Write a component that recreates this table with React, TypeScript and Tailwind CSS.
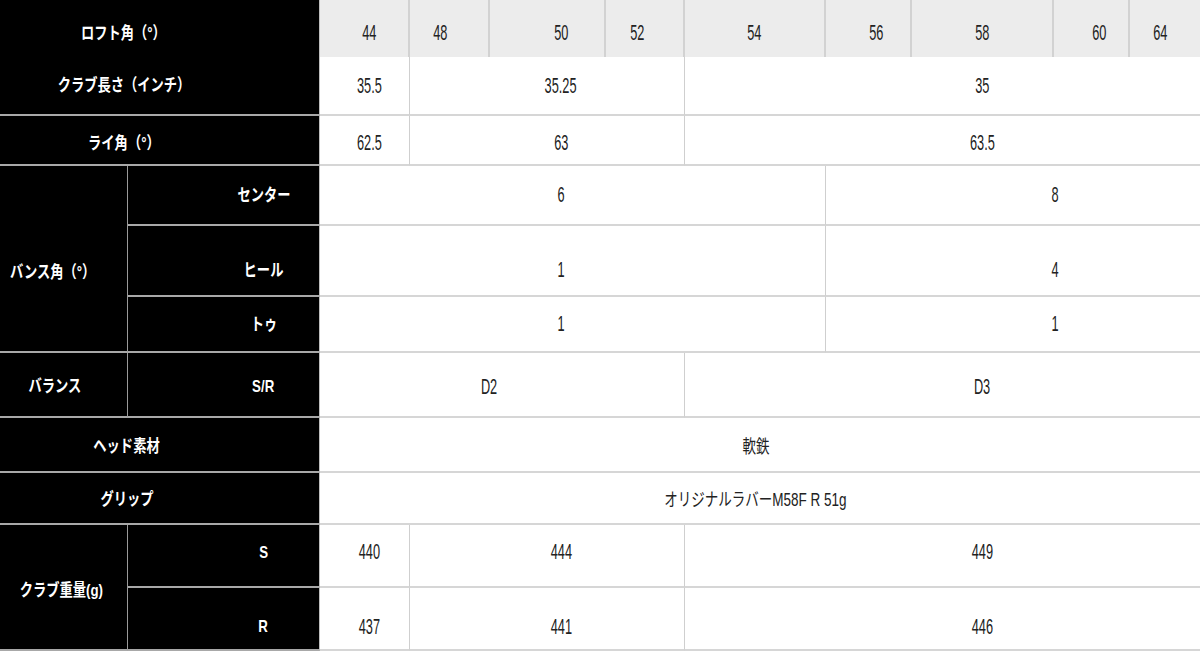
import React from 'react';

const NUM = 'inline-block scale-x-[0.58] text-[22px] leading-none text-[#222]';
const LABEL = 'inline-block scale-x-[0.78] text-[17px] font-bold leading-none text-white whitespace-nowrap';
const JP = 'inline-block scale-x-[0.75] text-[18px] leading-none text-[#222] whitespace-nowrap';

const cell = 'flex items-center justify-center';
const dataLine = 'border-b-2 border-b-[#d6d6d6]';
const labelLine = 'border-b-2 border-b-[#a8a8a8]';
const vLine = 'border-r border-r-[#cfcfcf]';

// loft header cells: width + padding to shift the number like the original
const loftCells = [
  { v: '44', c: 'w-[90px] pl-[10px] border-r-2 border-r-[#d2d2d2]' },
  { v: '48', c: 'w-[80px] pr-[18px] border-r-2 border-r-[#d2d2d2]' },
  { v: '50', c: 'w-[116px] pl-[28px] border-r-2 border-r-[#d2d2d2]' },
  { v: '52', c: 'w-[79px] pr-[15px] border-r-2 border-r-[#d2d2d2]' },
  { v: '54', c: 'w-[141px] border-r-2 border-r-[#d2d2d2]' },
  { v: '56', c: 'w-[86px] pl-[16px] border-r-2 border-r-[#d2d2d2]' },
  { v: '58', c: 'w-[142px] border-r-2 border-r-[#d2d2d2]' },
  { v: '60', c: 'w-[76px] pl-[16px] border-r-2 border-r-[#d2d2d2]' },
  { v: '64', c: 'flex-1 pr-[10px]' },
];

const ThreeCols: React.FC<{ vals: string[]; off?: string }> = ({ vals, off = '' }) => (
  <>
    <div className={`${cell} w-[90px] pl-[10px] ${vLine} ${dataLine} ${off}`}>
      <span className={NUM}>{vals[0]}</span>
    </div>
    <div className={`${cell} w-[275px] pl-[28px] ${vLine} ${dataLine} ${off}`}>
      <span className={NUM}>{vals[1]}</span>
    </div>
    <div className={`${cell} flex-1 pl-[79px] ${dataLine} ${off}`}>
      <span className={NUM}>{vals[2]}</span>
    </div>
  </>
);

const BounceRow: React.FC<{ label: string; vals: string[]; h: string; off?: string }> = ({ label, vals, h, off = '' }) => (
  <div className={`flex ${h}`}>
    <div className={`${cell} w-[192px] bg-black border-r border-r-[#bdbdbd] ${labelLine} pl-[80px] ${off}`}>
      <span className={LABEL}>{label}</span>
    </div>
    <div className={`${cell} w-[506px] pr-[22px] ${vLine} ${dataLine} ${off}`}>
      <span className={NUM}>{vals[0]}</span>
    </div>
    <div className={`${cell} flex-1 pl-[84px] ${dataLine} ${off}`}>
      <span className={NUM}>{vals[1]}</span>
    </div>
  </div>
);

const App: React.FC = () => {
  return (
    <div className="w-[1200px] h-[651px] overflow-hidden bg-white font-['Liberation_Sans','Noto_Sans_CJK_JP',sans-serif]">
      {/* loft */}
      <div className="flex h-[57px]">
        <div className={`${cell} w-[320px] bg-black border-r border-r-[#bdbdbd] pr-[72px] pt-[9px]`}>
          <span className={LABEL}>ロフト角（°）</span>
        </div>
        <div className="flex flex-1 bg-[#ececec]">
          {loftCells.map((l) => (
            <div key={l.v} className={`${cell} ${l.c} pt-[9px]`}>
              <span className={NUM}>{l.v}</span>
            </div>
          ))}
        </div>
      </div>

      {/* length */}
      <div className="flex h-[59px]">
        <div className={`${cell} w-[320px] bg-black border-r border-r-[#bdbdbd] ${labelLine} pr-[72px]`}>
          <span className={LABEL}>クラブ長さ（インチ）</span>
        </div>
        <ThreeCols vals={['35.5', '35.25', '35']} />
      </div>

      {/* lie */}
      <div className="flex h-[50px]">
        <div className={`${cell} w-[320px] bg-black border-r border-r-[#bdbdbd] ${labelLine} pr-[72px] pt-[6px]`}>
          <span className={LABEL}>ライ角（°）</span>
        </div>
        <ThreeCols vals={['62.5', '63', '63.5']} off="pt-[6px]" />
      </div>

      {/* bounce */}
      <div className="flex">
        <div className={`${cell} w-[128px] bg-black border-r border-r-[#9a9a9a] ${labelLine} pr-[22px] pt-[27px]`}>
          <span className={LABEL}>バンス角（°）</span>
        </div>
        <div className="flex flex-1 flex-col">
          <BounceRow label="センター" vals={['6', '8']} h="h-[60px]" />
          <BounceRow label="ヒール" vals={['1', '4']} h="h-[71px]" off="pt-[19px]" />
          <BounceRow label="トゥ" vals={['1', '1']} h="h-[56px]" />
        </div>
      </div>

      {/* balance */}
      <div className="flex h-[65px]">
        <div className={`${cell} w-[128px] bg-black border-r border-r-[#9a9a9a] ${labelLine} pr-[17px] pt-[4px]`}>
          <span className={LABEL}>バランス</span>
        </div>
        <div className={`${cell} w-[192px] bg-black border-r border-r-[#bdbdbd] ${labelLine} pl-[80px] pt-[4px]`}>
          <span className={LABEL}>S/R</span>
        </div>
        <div className={`${cell} w-[365px] pr-[25px] pt-[4px] ${vLine} ${dataLine}`}>
          <span className={NUM}>D2</span>
        </div>
        <div className={`${cell} flex-1 pl-[79px] pt-[4px] ${dataLine}`}>
          <span className={NUM}>D3</span>
        </div>
      </div>

      {/* head material */}
      <div className="flex h-[55px]">
        <div className={`${cell} w-[320px] bg-black border-r border-r-[#bdbdbd] ${labelLine} pr-[66px] pt-[4px]`}>
          <span className={LABEL}>ヘッド素材</span>
        </div>
        <div className={`${cell} flex-1 pr-[9px] pt-[4px] ${dataLine}`}>
          <span className={JP}>軟鉄</span>
        </div>
      </div>

      {/* grip */}
      <div className="flex h-[52px]">
        <div className={`${cell} w-[320px] bg-black border-r border-r-[#bdbdbd] ${labelLine} pr-[65px] pt-[3px]`}>
          <span className={LABEL}>グリップ</span>
        </div>
        <div className={`${cell} flex-1 pr-[10px] pt-[3px] ${dataLine}`}>
          <span className={JP}>オリジナルラバーM58F R 51g</span>
        </div>
      </div>

      {/* weight */}
      <div className="flex">
        <div className={`${cell} w-[128px] bg-black border-r border-r-[#9a9a9a] ${labelLine} pr-[5px] pt-[6px]`}>
          <span className={LABEL}>クラブ重量(g)</span>
        </div>
        <div className="flex flex-1 flex-col">
          <div className="flex h-[63px]">
            <div className={`${cell} w-[192px] bg-black border-r border-r-[#bdbdbd] ${labelLine} pl-[80px] pb-[7px]`}>
              <span className={LABEL}>S</span>
            </div>
            <ThreeCols vals={['440', '444', '449']} off="pb-[7px]" />
          </div>
          <div className="flex h-[63px]">
            <div className={`${cell} w-[192px] bg-black border-r border-r-[#bdbdbd] ${labelLine} pl-[80px] pt-[16px]`}>
              <span className={LABEL}>R</span>
            </div>
            <ThreeCols vals={['437', '441', '446']} off="pt-[16px]" />
          </div>
        </div>
      </div>
    </div>
  );
};

export default App;
